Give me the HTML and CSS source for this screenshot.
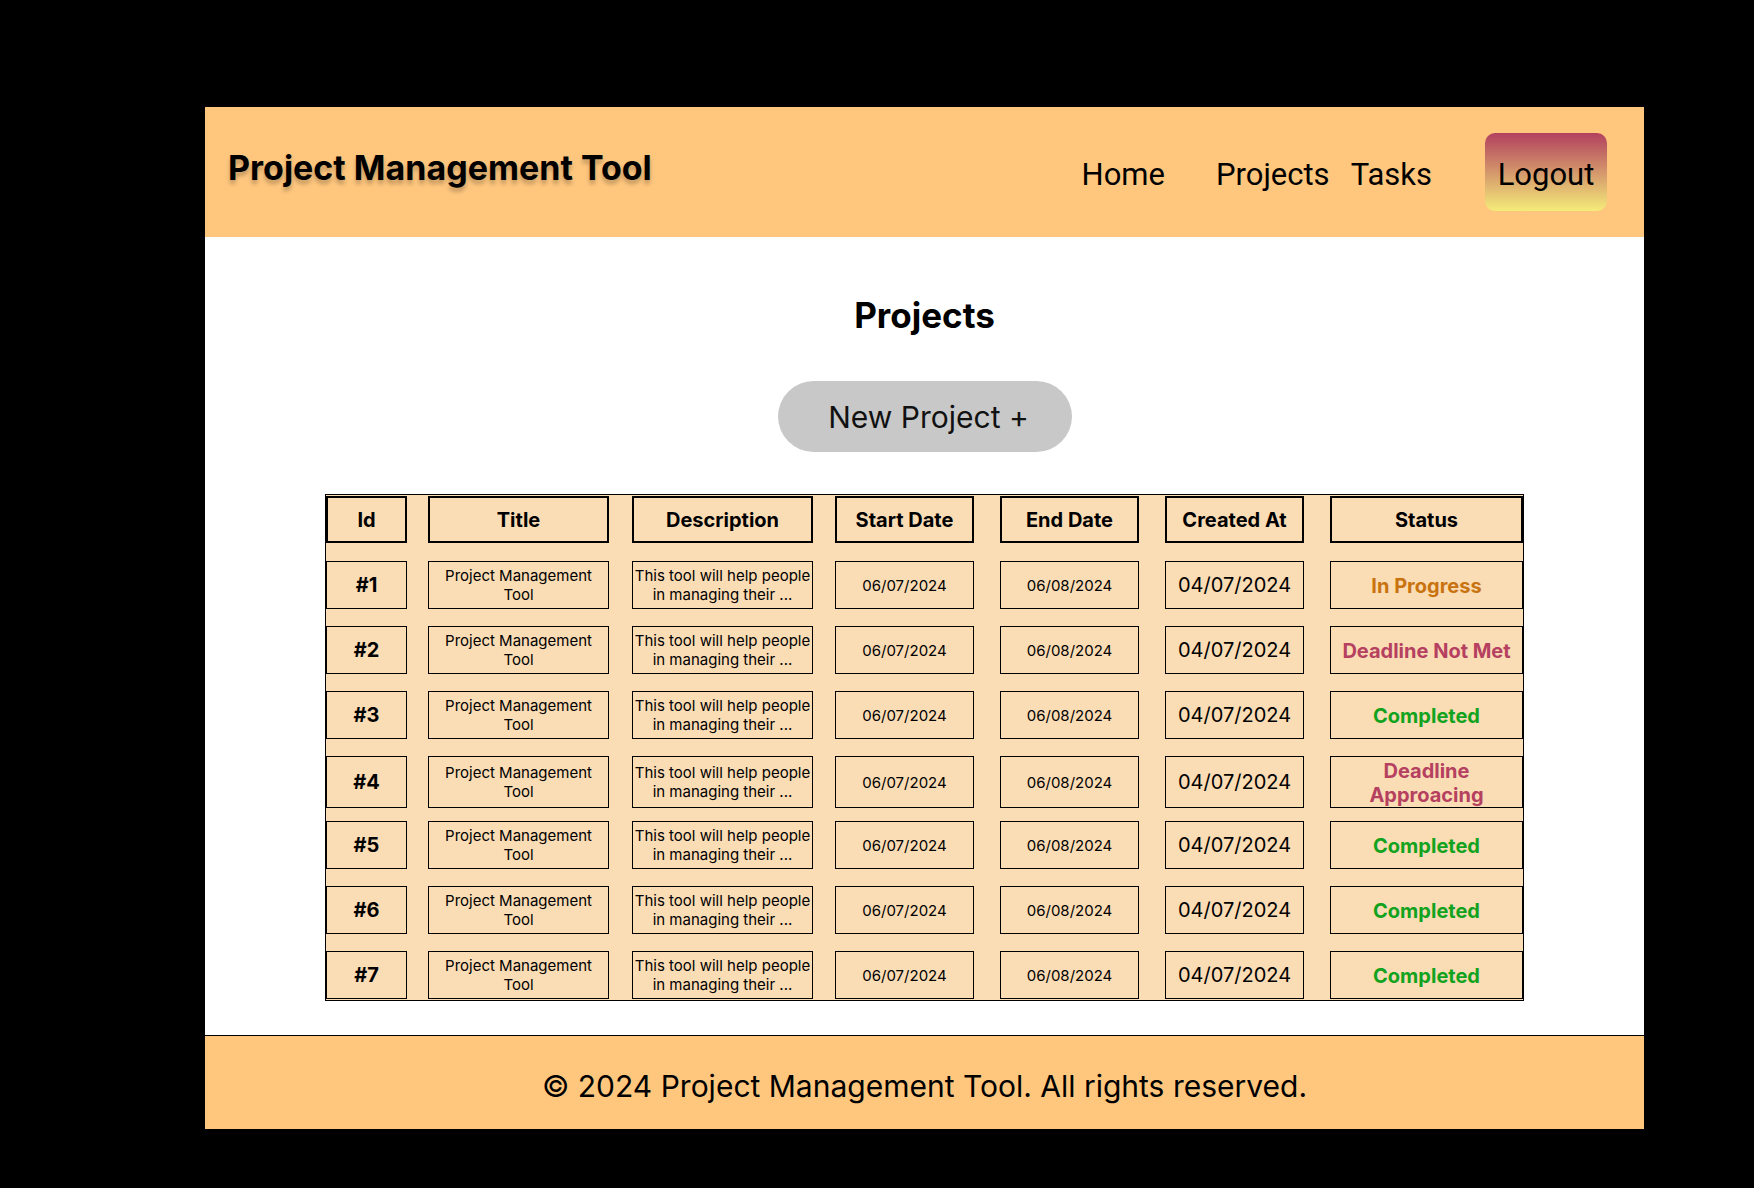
FILE: index.html
```html
<!DOCTYPE html>
<html lang="en">
<head>
<meta charset="utf-8">
<title>Project Management Tool</title>
<link rel="stylesheet" href="styles.css">
</head>
<body>
<div class="page">
  <header class="topbar">
    <h1 class="brand">Project Management Tool</h1>
    <nav class="nav">
      <a class="nav-link nav-home" href="#">Home</a>
      <a class="nav-link nav-projects" href="#">Projects</a>
      <a class="nav-link nav-tasks" href="#">Tasks</a>
      <a class="logout" href="#">Logout</a>
    </nav>
  </header>
  <main class="content">
    <h2 class="page-title">Projects</h2>
    <button class="new-btn" type="button">New Project +</button>
    <div class="table">
      <div class="trow thead">
        <div class="th">Id</div>
        <div class="th">Title</div>
        <div class="th">Description</div>
        <div class="th">Start Date</div>
        <div class="th">End Date</div>
        <div class="th">Created At</div>
        <div class="th th-status">Status</div>
      </div>
      <div class="trow">
        <div class="td td-id">#1</div>
        <div class="td td-small">Project Management Tool</div>
        <div class="td td-small">This tool will help people in managing their ...</div>
        <div class="td td-small">06/07/2024</div>
        <div class="td td-small">06/08/2024</div>
        <div class="td td-created">04/07/2024</div>
        <div class="td td-status st-progress">In Progress</div>
      </div>
      <div class="trow">
        <div class="td td-id">#2</div>
        <div class="td td-small">Project Management Tool</div>
        <div class="td td-small">This tool will help people in managing their ...</div>
        <div class="td td-small">06/07/2024</div>
        <div class="td td-small">06/08/2024</div>
        <div class="td td-created">04/07/2024</div>
        <div class="td td-status st-late">Deadline Not Met</div>
      </div>
      <div class="trow">
        <div class="td td-id">#3</div>
        <div class="td td-small">Project Management Tool</div>
        <div class="td td-small">This tool will help people in managing their ...</div>
        <div class="td td-small">06/07/2024</div>
        <div class="td td-small">06/08/2024</div>
        <div class="td td-created">04/07/2024</div>
        <div class="td td-status st-done">Completed</div>
      </div>
      <div class="trow">
        <div class="td td-id">#4</div>
        <div class="td td-small">Project Management Tool</div>
        <div class="td td-small">This tool will help people in managing their ...</div>
        <div class="td td-small">06/07/2024</div>
        <div class="td td-small">06/08/2024</div>
        <div class="td td-created">04/07/2024</div>
        <div class="td td-status st-late">Deadline Approacing</div>
      </div>
      <div class="trow">
        <div class="td td-id">#5</div>
        <div class="td td-small">Project Management Tool</div>
        <div class="td td-small">This tool will help people in managing their ...</div>
        <div class="td td-small">06/07/2024</div>
        <div class="td td-small">06/08/2024</div>
        <div class="td td-created">04/07/2024</div>
        <div class="td td-status st-done">Completed</div>
      </div>
      <div class="trow">
        <div class="td td-id">#6</div>
        <div class="td td-small">Project Management Tool</div>
        <div class="td td-small">This tool will help people in managing their ...</div>
        <div class="td td-small">06/07/2024</div>
        <div class="td td-small">06/08/2024</div>
        <div class="td td-created">04/07/2024</div>
        <div class="td td-status st-done">Completed</div>
      </div>
      <div class="trow">
        <div class="td td-id">#7</div>
        <div class="td td-small">Project Management Tool</div>
        <div class="td td-small">This tool will help people in managing their ...</div>
        <div class="td td-small">06/07/2024</div>
        <div class="td td-small">06/08/2024</div>
        <div class="td td-created">04/07/2024</div>
        <div class="td td-status st-done">Completed</div>
      </div>
    </div>
  </main>
  <footer class="footer">© 2024 Project Management Tool. All rights reserved.</footer>
</div>
</body>
</html>
```

FILE: styles.css
```css
* { box-sizing: border-box; }
html, body { margin: 0; padding: 0; }
body {
  background: #000;
  font-family: "Inter", "Noto Sans", sans-serif;
  color: #000;
}
.page {
  width: 1439px;
  margin: 107px 0 0 205px;
  background: #fff;
}
.topbar {
  height: 130px;
  background: #ffc77e;
  display: flex;
  align-items: center;
  justify-content: space-between;
  padding: 0 37px 0 23px;
}
.brand {
  margin: 0 0 9px;
  font-size: 34px;
  font-weight: 700;
  line-height: normal;
  text-shadow: 0 4px 4px rgba(0, 0, 0, 0.25);
}
.nav {
  display: flex;
  align-items: center;
  font-family: "Roboto", sans-serif;
  font-size: 31px;
}
.nav-link {
  color: #000;
  text-decoration: none;
  margin-top: 4px;
}
.nav-home { margin-right: 51px; }
.nav-projects { margin-right: 21px; }
.nav-tasks { margin-right: 53px; }
.logout {
  width: 122px;
  height: 78px;
  border-radius: 10px;
  background: linear-gradient(#b2405e, #f5ec79);
  display: flex;
  align-items: center;
  justify-content: center;
  padding-top: 4px;
  color: #000;
  text-decoration: none;
}
.content {
  display: flex;
  flex-direction: column;
  align-items: center;
  padding: 57px 0 34px;
}
.page-title {
  margin: 0;
  font-size: 35px;
  font-weight: 700;
  line-height: normal;
}
.new-btn {
  margin-top: 45px;
  width: 294px;
  height: 71px;
  border: none;
  border-radius: 36px;
  background: #c8c8c8;
  font-family: inherit;
  font-size: 30px;
  color: #111;
  padding: 0 0 0 8px;
}
.table {
  margin-top: 42px;
  width: 1199px;
  border: 1px solid #000;
  background: #fadcb5;
  padding: 1px 0 1px;
  display: flex;
  flex-direction: column;
  gap: 17px;
}
.trow {
  display: grid;
  grid-template-columns: 81px 202px 204px 161px 165px 165px 219px;
  height: 48px;
}
.thead {
  height: 47px;
  margin-bottom: 1px;
}
.trow > :nth-child(2) { margin-left: 21px; }
.trow > :nth-child(3) { margin-left: 23px; }
.trow > :nth-child(4) { margin-left: 22px; }
.trow > :nth-child(5) { margin-left: 26px; }
.trow > :nth-child(6) { margin-left: 26px; }
.trow > :nth-child(7) { margin-left: 26px; }
.th, .td {
  display: flex;
  align-items: center;
  justify-content: center;
  text-align: center;
  line-height: normal;
}
.th {
  border: 2px solid #000;
  font-size: 20px;
  font-weight: 700;
}
.td {
  border: 1px solid #000;
}
.td-id { font-size: 20px; font-weight: 700; }
.td-small { font-size: 15px; }
.td-created { font-size: 20px; }
.td-status { font-size: 20px; font-weight: 700; padding-top: 2px; }
.st-progress { color: #c8730f; }
.st-late { color: #b5405f; }
.st-done { color: #12a31e; }
.footer {
  height: 94px;
  border-top: 1px solid #000;
  background: #ffc77e;
  display: flex;
  align-items: center;
  justify-content: center;
  padding-top: 6px;
  font-size: 30px;
}
```
